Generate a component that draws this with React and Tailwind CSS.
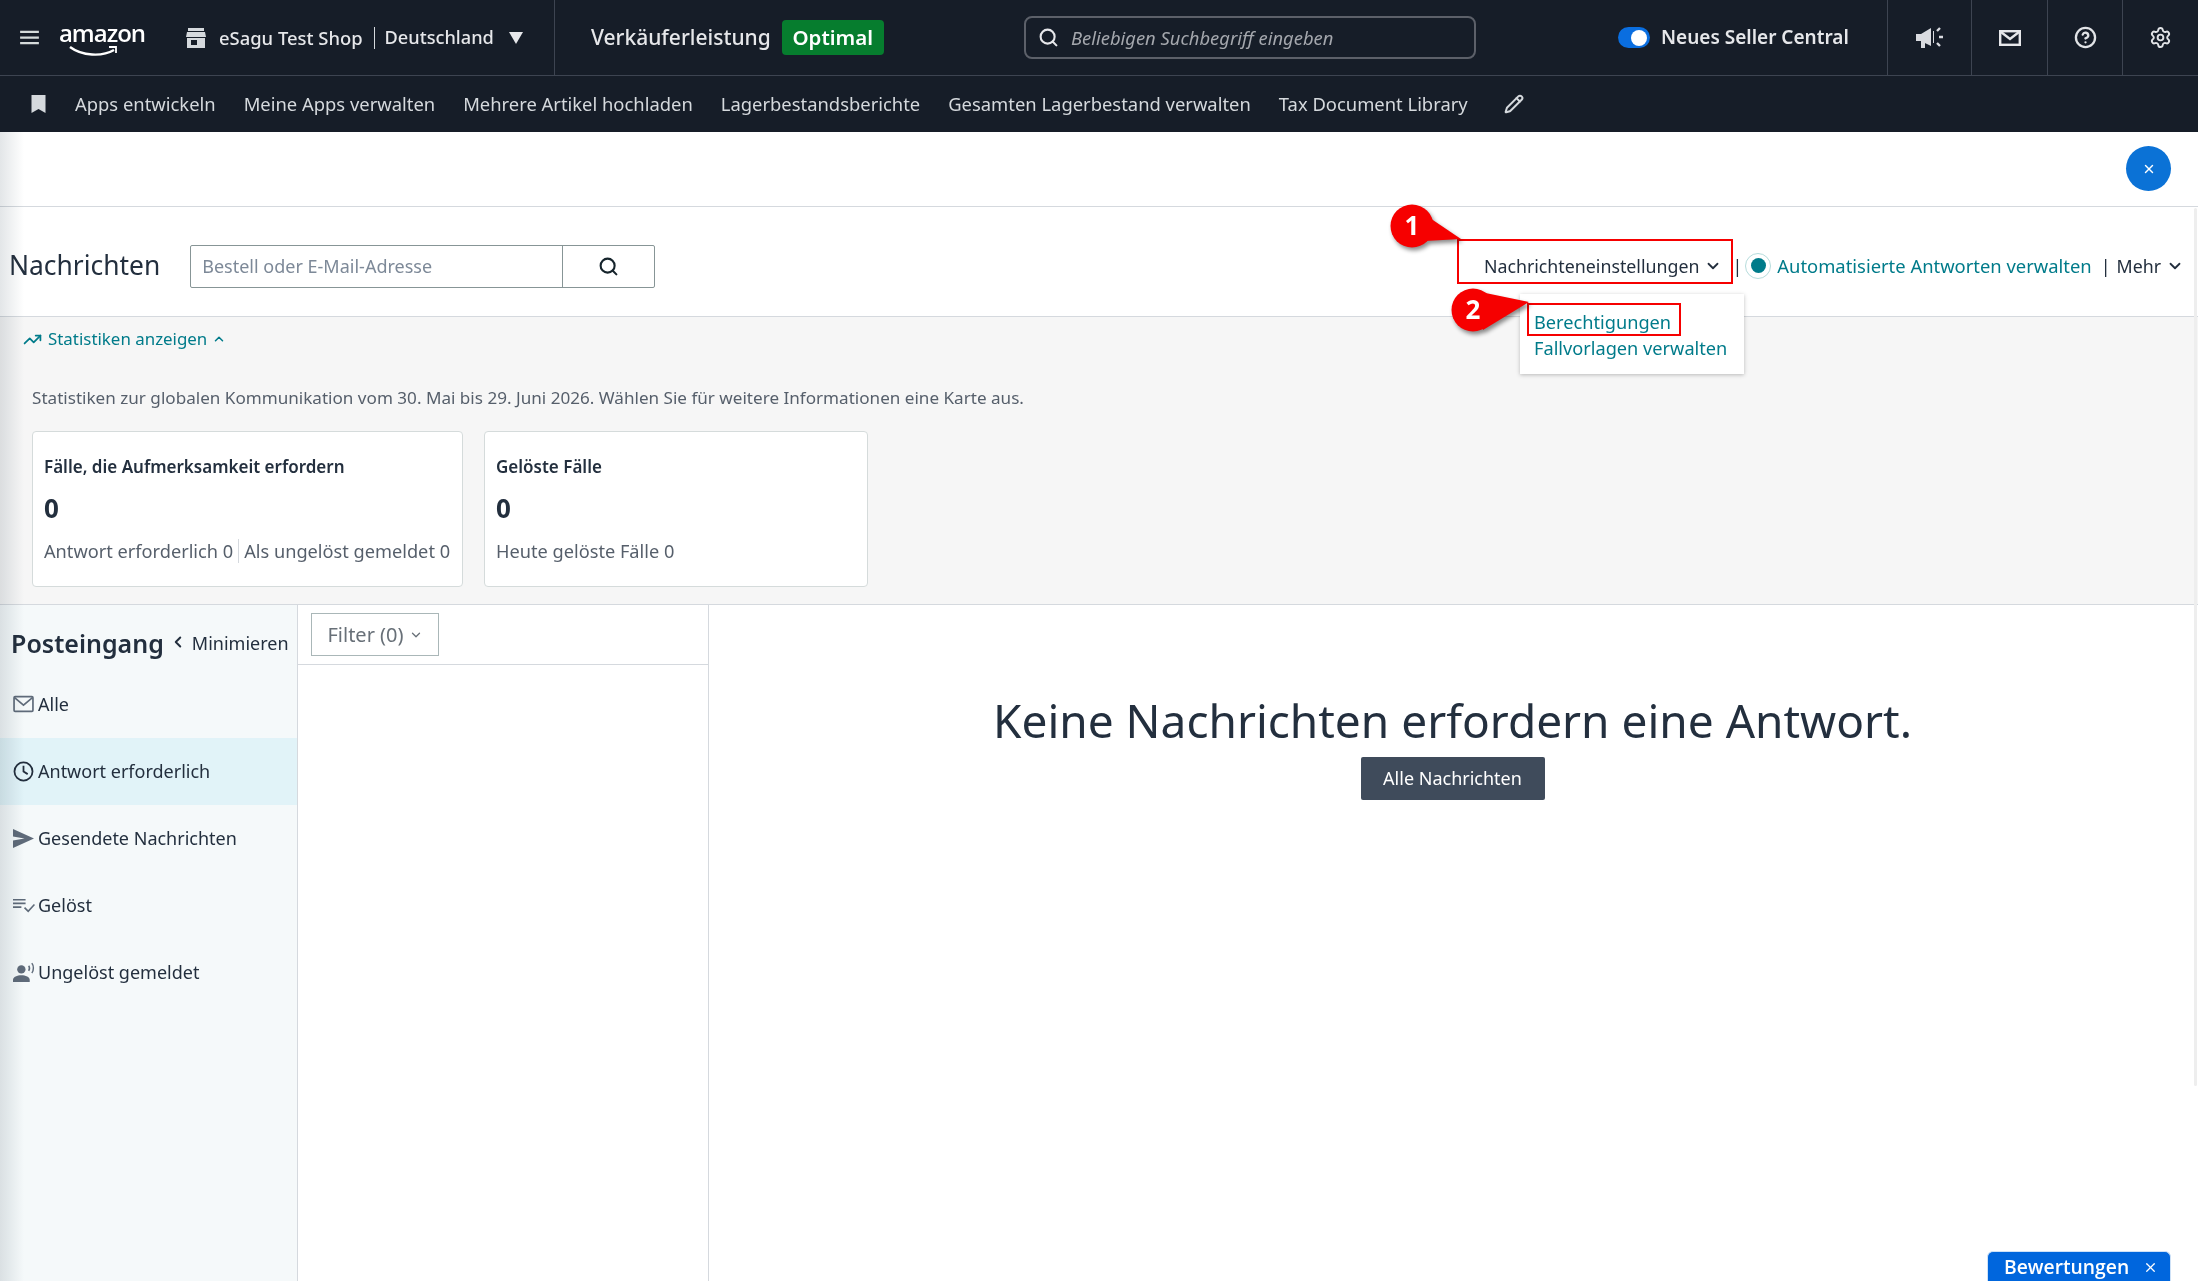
import { ChevronDown, ChevronLeft, ChevronUp, CircleHelp, Pencil, Search, Settings, TrendingUp, X } from "lucide-react";

const NAV_LINKS = [
  "Apps entwickeln",
  "Meine Apps verwalten",
  "Mehrere Artikel hochladen",
  "Lagerbestandsberichte",
  "Gesamten Lagerbestand verwalten",
  "Tax Document Library",
];

function MailIcon() {
  return (
    <svg viewBox="0 0 20 16" className="h-[18px] w-[21px]" fill="none" stroke="#5f6b7a" strokeWidth="1.6">
      <rect x="1" y="1" width="18" height="14" rx="1" />
      <path d="M1.5 2l8.5 7 8.5-7" />
    </svg>
  );
}

function ClockIcon() {
  return (
    <svg viewBox="0 0 20 20" className="h-[21px] w-[21px]" fill="none" stroke="#232f3e" strokeWidth="1.7">
      <circle cx="10" cy="10" r="8.6" />
      <path d="M10 4.5V10l4 2.5" />
    </svg>
  );
}

function SendIcon() {
  return (
    <svg viewBox="0 0 20 18" className="h-[19px] w-[21px]" fill="#5f6b7a">
      <path d="M0 0l20 9L0 18v-7l11-2L0 7z" />
    </svg>
  );
}

function SolvedIcon() {
  return (
    <svg viewBox="0 0 21 14" className="h-[15px] w-[22px]" fill="none" stroke="#5f6b7a" strokeWidth="1.6">
      <path d="M0 1.5h12M0 5h12M0 8.5h8" />
      <path d="M11 9l3.5 3.5L20.5 6" />
    </svg>
  );
}

function UnsolvedIcon() {
  return (
    <svg viewBox="0 0 22 19" className="h-[20px] w-[23px]" fill="#5f6b7a">
      <circle cx="8" cy="7" r="4" />
      <path d="M0 19v-2c0-3 4-4.500 8-4.500s8 1.500 8 4.500v2z" />
      <path d="M18 1c2 2.500 2 7 0 9.500" fill="none" stroke="#5f6b7a" strokeWidth="1.4" />
      <path d="M15 3.500c1 1.500 1 3.500 0 5" fill="none" stroke="#5f6b7a" strokeWidth="1.4" />
    </svg>
  );
}

const INBOX = [
  { label: "Alle", icon: <MailIcon /> },
  { label: "Antwort erforderlich", icon: <ClockIcon />, active: true },
  { label: "Gesendete Nachrichten", icon: <SendIcon /> },
  { label: "Gelöst", icon: <SolvedIcon /> },
  { label: "Ungelöst gemeldet", icon: <UnsolvedIcon /> },
];

function TopBar() {
  return (
    <div className="flex h-[76px] items-stretch border-b border-[#3d4451] bg-[#161d28] font-['Noto_Sans',sans-serif] text-[#e6e7ea]">
      <div className="flex w-[555px] shrink-0 items-center border-r border-[#3d4451] pl-[20px]">
        <svg viewBox="0 0 20 16" className="h-[15px] w-[19px]" fill="none" stroke="#d5dbdb" strokeWidth="2.400">
          <path d="M0 2h20M0 8h20M0 14h20" />
        </svg>
        <div className="relative ml-[21px] flex h-[40px] w-[84px] flex-col items-center">
          <span className="font-['Open_Sans',sans-serif] text-[24px] leading-[30px] font-semibold tracking-[-1px] text-white">amazon</span>
          <svg viewBox="0 0 50 14" className="absolute top-[27px] left-[9px] h-[14px] w-[50px]" fill="none" stroke="white" strokeWidth="2.400">
            <path d="M1 2c12 9 32 10 44 3" />
            <path d="M40 2h7v6" strokeWidth="1.800" />
          </svg>
        </div>
        <svg viewBox="0 0 20 20" className="ml-[42px] h-[20px] w-[20px]" fill="#d5d9dd">
          <path d="M2 0h16v3H2zM1 4h18l1 5H0zM1 10h18v10H1z" />
          <path d="M5 12h6v5H5z" fill="#161d28" />
        </svg>
        <span className="ml-[13px] text-[18.400px] font-medium whitespace-nowrap">eSagu Test Shop</span>
        <span className="ml-[11px] h-[22px] w-px bg-[#d5d9dd]" />
        <span className="ml-[10px] text-[18.200px] font-medium whitespace-nowrap">Deutschland</span>
        <svg viewBox="0 0 14 12" className="ml-[15px] h-[12px] w-[14px]" fill="#e6e7ea">
          <path d="M0 0h14L7 12z" />
        </svg>
      </div>
      <div className="flex w-[469px] shrink-0 items-center pl-[36px]">
        <span className="text-[21px] font-medium whitespace-nowrap">Verkäuferleistung</span>
        <span className="ml-[11px] flex h-[35px] w-[102px] items-center justify-center rounded-[4px] bg-[#067d2e] text-[20.500px] font-semibold text-white">
          Optimal
        </span>
      </div>
      <div className="flex w-[594px] shrink-0 items-center">
        <div className="flex h-[43px] w-[452px] items-center rounded-[8px] border-2 border-[#5c6069] pl-[12px] text-[#a4a7ad]">
          <Search size={21} color="#e6e7ea" strokeWidth={2.400} />
          <span className="ml-[12px] text-[18.400px] italic">Beliebigen Suchbegriff eingeben</span>
        </div>
      </div>
      <div className="flex w-[269px] shrink-0 items-center">
        <div className="flex h-[21px] w-[32px] items-center justify-end rounded-full bg-[#0a6ee0] pr-[3px]">
          <span className="h-[16px] w-[16px] rounded-full bg-white" />
        </div>
        <span className="ml-[11px] text-[19px] font-semibold whitespace-nowrap">Neues Seller Central</span>
      </div>
      <div className="flex w-[84px] shrink-0 items-center justify-center border-l border-[#3d4451]">
        <svg viewBox="0 0 28 24" className="h-[24px] w-[28px]" fill="#d9dbe0">
          <path d="M0 8h5l10-6v18l-10-5H9v7H5v-7H0z" />
          <path d="M17 5h1v12h-1z" />
          <path d="M21 5l3-3M23 11h4M21 17l3 3" fill="none" stroke="#d9dbe0" strokeWidth="2.400" />
        </svg>
      </div>
      <div className="flex w-[76px] shrink-0 items-center justify-center border-l border-[#3d4451]">
        <svg viewBox="0 0 22 16" className="h-[16px] w-[22px]" fill="none" stroke="#e6e7ea" strokeWidth="2.400">
          <rect x="1.200" y="1.200" width="19.600" height="13.600" />
          <path d="M2 2l9 7 9-7" />
        </svg>
      </div>
      <div className="flex w-[75px] shrink-0 items-center justify-center border-l border-[#3d4451]">
        <CircleHelp size={23} color="#e1e3e6" strokeWidth={2.400} />
      </div>
      <div className="flex flex-1 items-center justify-center border-l border-[#3d4451]">
        <Settings size={23} color="#e1e3e6" strokeWidth={2} />
      </div>
    </div>
  );
}

function LinkBar() {
  return (
    <div className="flex h-[56px] items-center bg-[#161d28] pl-[31px] font-['Noto_Sans',sans-serif] text-[18.400px] text-[#d5d9dd]">
      <svg viewBox="0 0 14 18" className="mr-[29px] h-[18px] w-[15px]" fill="#d5d9dd">
        <path d="M0 0h14v18l-7-4-7 4z" />
      </svg>
      <div className="flex gap-[28px] whitespace-nowrap">
        {NAV_LINKS.map((item) => (
          <span key={item}>{item}</span>
        ))}
      </div>
      <Pencil size={20} color="#d5d9dd" strokeWidth={2.400} className="ml-[36px]" />
    </div>
  );
}

function StatCard({ title, className, children }) {
  return (
    <div className={`h-[156px] rounded-[4px] border border-[#d5dbdb] bg-white px-[11px] pt-[23px] text-[#232f3e] ${className}`}>
      <div className="text-[17px] leading-[24px] font-semibold whitespace-nowrap">{title}</div>
      <div className="mt-[12px] text-[26px] leading-[34px] font-bold">0</div>
      <div className="mt-[13px] flex items-center text-[18.200px] leading-[26px] whitespace-nowrap text-[#565f6b]">{children}</div>
    </div>
  );
}

function Callout({ number, className, tail, cx, cy }) {
  return (
    <svg
      viewBox="0 0 90 60"
      className={`absolute h-[60px] w-[90px] drop-shadow-[2px_3px_2px_rgba(0,0,0,0.45)] ${className}`}
    >
      <path d={tail} fill="#f60000" />
      <circle cx={cx} cy={cy} r="21.500" fill="#f60000" />
      <text x={cx} y={cy + 9} textAnchor="middle" fontFamily="Noto Sans, sans-serif" fontSize="26" fontWeight="700" fill="white">
        {number}
      </text>
    </svg>
  );
}

export default function App() {
  return (
    <div className="relative flex h-[1281px] w-[2198px] flex-col overflow-hidden bg-white font-['Noto_Sans',sans-serif] text-[#232f3e]">
      <TopBar />
      <LinkBar />

      <div className="flex h-[75px] shrink-0 items-start justify-end border-b border-[#d5d9de] pt-[14px] pr-[27px]">
        <button type="button" className="flex h-[45px] w-[45px] items-center justify-center rounded-full bg-[#0b72d6]">
          <X size={14} color="white" strokeWidth={2.400} />
        </button>
      </div>

      <div className="flex h-[110px] shrink-0 items-center border-b border-[#d5d9de] pt-[9px] pr-[14px] pl-[9px]">
        <h1 className="text-[26.400px] font-normal whitespace-nowrap">Nachrichten</h1>
        <div className="ml-[30px] flex h-[43px] w-[465px] rounded-[2px] border border-[#879596] bg-white">
          <div className="flex flex-1 items-center pl-[11px] text-[18px] text-[#7d8998]">Bestell oder E-Mail-Adresse</div>
          <div className="flex w-[92px] items-center justify-center border-l border-[#879596]">
            <Search size={21} color="#16242c" strokeWidth={2.400} />
          </div>
        </div>
        <div className="ml-auto flex items-center text-[17.800px] whitespace-nowrap">
          <span>Nachrichteneinstellungen</span>
          <ChevronDown size={18} color="#232f3e" strokeWidth={2.400} className="ml-[5px]" />
          <span className="ml-[10px] text-[#232f3e]">|</span>
          <span className="ml-[3px] flex h-[26px] w-[26px] items-center justify-center rounded-full border border-[#b6dcdc]">
            <span className="h-[15px] w-[15px] rounded-full bg-[#007b8a]" />
          </span>
          <span className="ml-[6px] text-[18.400px] text-[#007b8a]">Automatisierte Antworten verwalten</span>
          <span className="ml-[9px] text-[#232f3e]">|</span>
          <span className="ml-[6px]">Mehr</span>
          <ChevronDown size={18} color="#232f3e" strokeWidth={2.400} className="ml-[5px]" />
        </div>
      </div>

      <div className="h-[288px] shrink-0 border-b border-[#d5d9de] bg-[#f6f6f6] px-[32px]">
        <div className="-ml-[9px] flex h-[44px] items-center text-[16.900px] text-[#007b8a]">
          <TrendingUp size={19} color="#007b8a" strokeWidth={2.200} />
          <span className="ml-[6px]">Statistiken anzeigen</span>
          <ChevronUp size={14} color="#007b8a" strokeWidth={2.600} className="ml-[5px]" />
        </div>
        <p className="mt-[25px] text-[17.100px] leading-[24px] whitespace-nowrap text-[#565f6b]">
          Statistiken zur globalen Kommunikation vom 30. Mai bis 29. Juni 2026. Wählen Sie für weitere Informationen eine Karte aus.
        </p>
        <div className="mt-[21px] flex gap-[21px]">
          <StatCard title="Fälle, die Aufmerksamkeit erfordern" className="w-[431px]">
            <span>Antwort erforderlich 0</span>
            <span className="mx-[5px] h-[24px] w-px bg-[#d5d9de]" />
            <span>Als ungelöst gemeldet 0</span>
          </StatCard>
          <StatCard title="Gelöste Fälle" className="w-[384px]">
            <span>Heute gelöste Fälle 0</span>
          </StatCard>
        </div>
      </div>

      <div className="flex min-h-0 flex-1">
        <aside className="w-[298px] shrink-0 border-r border-[#d5d9de] bg-[#f5f9fa]">
          <div className="flex h-[65.500px] items-start pt-[21px] pl-[11px] whitespace-nowrap">
            <span className="text-[25px] leading-[34px] font-semibold">Posteingang</span>
            <ChevronLeft size={18} color="#232f3e" strokeWidth={2.600} className="mt-[7px] ml-[5px]" />
            <span className="mt-[4px] ml-[5px] text-[18px] leading-[26px]">Minimieren</span>
          </div>
          <ul>
            {INBOX.map((entry) => (
              <li
                key={entry.label}
                className={`flex h-[67px] items-center pl-[13px] text-[18px] ${entry.active ? "bg-[#e1f3f8]" : ""}`}
              >
                <span className="flex w-[25px] shrink-0 items-center">{entry.icon}</span>
                <span className="whitespace-nowrap">{entry.label}</span>
              </li>
            ))}
          </ul>
        </aside>
        <div className="w-[411px] shrink-0 border-r border-[#d5d9de]">
          <div className="flex h-[60px] items-start border-b border-[#d5d9de] pt-[8px] pl-[13px]">
            <button type="button" className="flex h-[43px] w-[128px] items-center justify-center border border-[#aab7b8] text-[20px] text-[#687078]">
              Filter (0)
              <ChevronDown size={14} color="#687078" strokeWidth={2.200} className="ml-[5px]" />
            </button>
          </div>
        </div>
        <div className="flex flex-1 flex-col items-center pt-[85px] pr-[2px]">
          <h2 className="text-[46px] leading-[60px] font-normal whitespace-nowrap">Keine Nachrichten erfordern eine Antwort.</h2>
          <button type="button" className="mt-[7px] flex h-[43px] w-[184px] items-center justify-center rounded-[2px] bg-[#3f4b5b] text-[18px] text-white">
            Alle Nachrichten
          </button>
        </div>
      </div>

      {/* dropdown + screenshot annotations sit over the page */}
      <div className="absolute top-[294px] left-[1520px] h-[80px] w-[224px] bg-white pt-[15px] pl-[14px] text-[18.200px] leading-[26px] text-[#007b8a] shadow-[0_1px_4px_rgba(0,0,0,0.25)]">
        <div>Berechtigungen</div>
        <div>Fallvorlagen verwalten</div>
      </div>
      <div className="absolute top-[239px] left-[1457px] h-[45px] w-[276px] border-[2.500px] border-[#f60000]" />
      <div className="absolute top-[303px] left-[1527px] h-[33px] w-[154px] border-[2.500px] border-[#f60000]" />
      <Callout number="1" className="top-[198px] left-[1385px]" tail="M36 14L76 41L40 43Z" cx={27} cy={28} />
      <Callout number="2" className="top-[282px] left-[1445px]" tail="M26 8L84 20L38 48Z" cx={28} cy={28} />

      {/* left edge shade and page scrollbar */}
      <div className="pointer-events-none absolute top-[132px] bottom-0 left-0 w-[24px] bg-gradient-to-r from-[#e3e6e8] to-white mix-blend-multiply" />
      <div className="absolute top-[208px] right-[1px] h-[878px] w-[3px] rounded-full bg-[#eeeeee]" />

      <div className="absolute right-[27px] bottom-0 flex h-[30px] w-[184px] items-center justify-between rounded-t-[6px] border border-b-0 border-[#cfe2f7] bg-[#0066dd] pt-[1px] pr-[12px] pl-[16px] font-['Open_Sans',sans-serif] text-[19.300px] font-semibold text-white">
        Bewertungen
        <X size={15} color="white" strokeWidth={2} />
      </div>
    </div>
  );
}
